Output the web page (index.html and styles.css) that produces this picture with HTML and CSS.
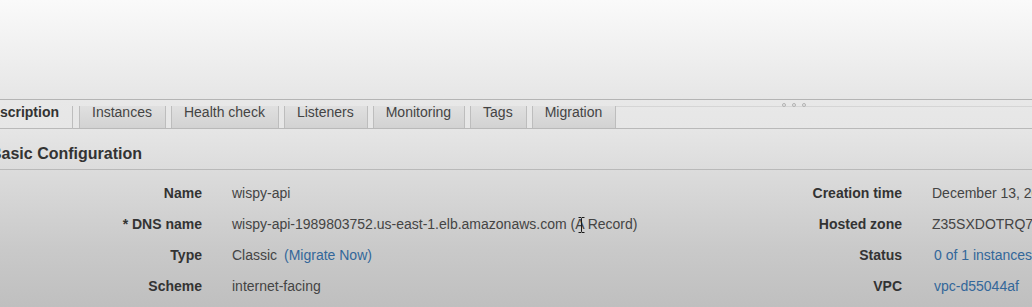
FILE: index.html
```html
<!DOCTYPE html>
<html>
<head>
<meta charset="utf-8">
<link rel="stylesheet" href="styles.css">
</head>
<body>
<div class="viewport">
  <div class="top-pane"></div>
  <div class="panel">
    <div class="tabstrip">
      <div class="tabs">
        <div class="tab active">Description</div>
        <div class="tab">Instances</div>
        <div class="tab">Health check</div>
        <div class="tab">Listeners</div>
        <div class="tab">Monitoring</div>
        <div class="tab">Tags</div>
        <div class="tab">Migration</div>
        <div class="tab-fill"></div>
      </div>
      <div class="grip"><span></span><span></span><span></span></div>
    </div>
    <div class="content">
      <h2 class="section-title">Basic Configuration</h2>
      <div class="details">
        <div class="lbl">Name</div>
        <div class="val">wispy-api</div>
        <div class="lbl">Creation time</div>
        <div class="val">December 13, 2017 at 3:01:20 PM UTC-5</div>

        <div class="lbl">* DNS name</div>
        <div class="val dns">wispy-api-1989803752.us-east-1.elb.amazonaws.com (A Record)<svg class="ibeam" width="9" height="18" viewBox="0 0 9 18"><path d="M1.5 1.5h2.5l0.5 0.8 0.5-0.8h2.5M4.5 2.3v13.4M1.5 16.5h2.5l0.5-0.8 0.5 0.8h2.5" fill="none" stroke="#1a1a1a" stroke-width="1"/></svg></div>
        <div class="lbl">Hosted zone</div>
        <div class="val">Z35SXDOTRQ7X7K</div>

        <div class="lbl">Type</div>
        <div class="val">Classic <a class="link migrate">(Migrate Now)</a></div>
        <div class="lbl">Status</div>
        <div class="val"><a class="link">0 of 1 instances in service</a></div>

        <div class="lbl">Scheme</div>
        <div class="val">internet-facing</div>
        <div class="lbl">VPC</div>
        <div class="val"><a class="link">vpc-d55044af</a></div>
      </div>
    </div>
  </div>
</div>
</body>
</html>
```

FILE: styles.css
```css
html, body {
  margin: 0;
  padding: 0;
}
body {
  width: 1032px;
  height: 307px;
  overflow: hidden;
  font-family: "Liberation Sans", Arial, sans-serif;
  font-size: 14px;
  color: #444;
  background: #c8c8c8;
}
.viewport {
  width: 1032px;
  height: 307px;
  overflow: hidden;
  display: flex;
  flex-direction: column;
}
.top-pane {
  height: 99px;
  flex: none;
  background: linear-gradient(to bottom, #fafafa 0%, #f6f6f6 20%, #e6e6e6 100%);
  border-bottom: 1px solid #b4b4b4;
}
.panel {
  flex: 1;
  margin-left: -30px;
  display: flex;
  flex-direction: column;
  background: linear-gradient(to bottom, #e8e8e8 0px, #e6e6e6 28px, #dcdcdc 70px, #c9c9c9 150px, #bfbfbf 207px);
}
.tabstrip {
  position: relative;
  padding-top: 6px;
  height: 22px;
  flex: none;
}
.tabs {
  display: flex;
  height: 22px;
  border-bottom: 1px solid #b9b9b9;
}
.tab {
  height: 22px;
  line-height: 12px;
  padding: 0 13px 0 12px;
  margin-left: 5px;
  color: #444;
  white-space: nowrap;
  border-left: 1px solid #bdbdbd;
  border-right: 1px solid #bdbdbd;
  background: linear-gradient(to bottom, #e0e0e0, #d2d2d2);
}
.tab.active {
  margin-left: 0;
  border-left: none;
  background: transparent;
  height: 23px;
  margin-bottom: -1px;
  font-weight: bold;
  color: #333;
}
.tab.active + .tab {
  margin-left: 6px;
}
.tab-fill {
  flex: 1;
  border-top: 1px solid #d5d5d5;
}
.grip {
  position: absolute;
  top: 3px;
  left: 812px;
  display: flex;
  gap: 6px;
}
.grip span {
  width: 4px;
  height: 4px;
  border: 1px solid #b2b2b2;
  border-radius: 50%;
  box-sizing: border-box;
}
.content {
  flex: 1;
}
.section-title {
  margin: 0;
  padding: 16px 0 5px 20px;
  font-size: 16px;
  line-height: 20px;
  font-weight: bold;
  color: #333;
  border-bottom: 1px solid #b9b9b9;
  width: 1200px;
}
.details {
  display: grid;
  grid-template-columns: 232px 490px 150px 1fr;
  column-gap: 30px;
  grid-auto-rows: 31px;
  line-height: 31px;
  padding-top: 8px;
}
.lbl {
  text-align: right;
  font-weight: bold;
  color: #333;
  white-space: nowrap;
}
.val {
  white-space: nowrap;
  color: #444;
}
.dns {
  position: relative;
}
.ibeam {
  position: absolute;
  left: 345px;
  top: 7px;
}
.link {
  color: #33679a;
  text-decoration: none;
  padding-left: 2px;
}
.link.migrate {
  padding-left: 3px;
}
```
